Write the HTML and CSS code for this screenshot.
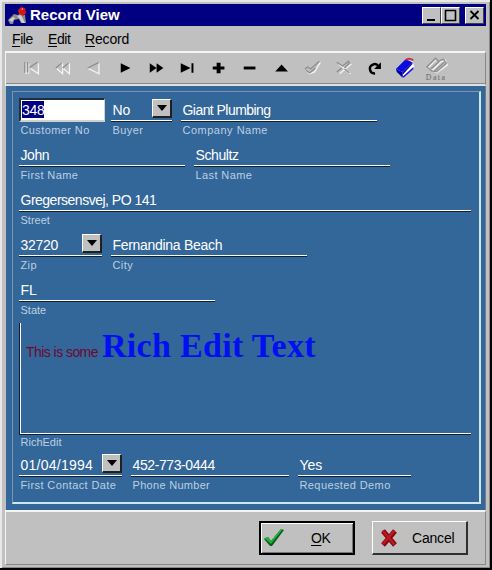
FILE: index.html
```html
<!DOCTYPE html>
<html lang="en">
<head>
<meta charset="utf-8">
<title>Record View</title>
<link rel="stylesheet" href="styles.css">
</head>
<body>
<div class="window">
  <header class="titlebar">
    <svg class="app-icon" width="20" height="20" viewBox="0 0 20 20">
      <path d="M0 15l3-3 3-3 4 1 3-2 4 2 1 8h-5l-2-4-5 1-1 4H2z" fill="#8c8c8c"/>
      <path d="M1 15l4-3 2 1-3 4zM9 11l4-1 2 4 2 4h-3l-3-5z" fill="#d0d0d0"/>
      <path d="M10 5l3-3 4 1 1 5-3 3-4-2z" fill="#d81414"/>
      <path d="M13 4l2-1v2z" fill="#f99"/>
    </svg>
    <h1>Record View</h1>
    <div class="controls">
      <button class="ctl"><svg width="17" height="14"><path d="M4 12h8" stroke="#000" stroke-width="2"/></svg></button>
      <button class="ctl"><svg width="17" height="14"><path d="M3.500 2v10.500h10V2M3 2.500h11" fill="none" stroke="#000" stroke-width="1.600"/></svg></button>
      <button class="ctl close"><svg width="17" height="14"><path d="M4.500 3l8 8M12.500 3l-8 8" stroke="#000" stroke-width="1.800"/></svg></button>
    </div>
  </header>
  <nav class="menu"><span class="m-file"><u>F</u>ile</span><span class="m-edit"><u>E</u>dit</span><span class="m-rec"><u>R</u>ecord</span></nav>
  <div class="toolbar">
    <svg class="off" viewBox="0 0 32 32"><path class="hi" d="M12 21h-2v-10M23 11v11l-8-5.500M13 11v11"/><path class="lo" d="M9 10v11M12 10v11M22 10l-8 5.500"/></svg>
    <svg class="off" viewBox="0 0 32 32"><path class="hi" d="M16 11v11l-6-5.500M23 11v11l-6-5.500"/><path class="lo" d="M15 11l-6 5M22 11l-6 5"/></svg>
    <svg class="off" viewBox="0 0 32 32"><path class="hi" d="M21.500 11v11l-11-5.500"/><path class="lo" d="M21 10.500l-11 5.500"/></svg>
    <svg viewBox="0 0 32 32"><path d="M11 11l10 5-10 5z"/></svg>
    <svg viewBox="0 0 32 32"><path d="M9 11l7 5-7 5zM16 11l7 5-7 5z"/></svg>
    <svg viewBox="0 0 32 32"><path d="M9 11l10 5-10 5zM20 11h2v10h-2z"/></svg>
    <svg viewBox="0 0 32 32"><path d="M14 10.500h4v4h4v3h-4v4h-4v-4h-4v-3h4z"/></svg>
    <svg viewBox="0 0 32 32"><path d="M10 14.500h12v3H10z"/></svg>
    <svg viewBox="0 0 32 32"><path d="M9.500 19.500l6.500-7 6.500 7z"/></svg>
    <svg class="off" viewBox="0 0 32 32"><path class="hi" d="M9 18l4 4 5-2 6-10"/><path class="lo" d="M8 17l3-2 3 2 9-8M9 18l4 3 6-5"/></svg>
    <svg class="off" viewBox="0 0 32 32"><path class="hi" d="M11 12l12 10M24 12l-12 10"/><path class="lo" d="M9 10l6 4 6-5 1 2-5 5M9 20l5-4M17 17l5 4"/></svg>
    <svg viewBox="0 0 32 32"><path d="M16.500 21.500a4.700 4.700 0 1 1 3.500-7" fill="none" stroke="#000" stroke-width="2.500"/><path d="M22.500 10v7h-7z"/></svg>
    <svg viewBox="0 0 32 32"><path d="M7 18l10-10 6 1 2 6-10 10z" fill="#fff"/><path d="M6 17L16 7l7 3-10 10z" fill="#0b0be0"/><path d="M6 17l7 3v6l-6-6z" fill="#0000a0"/><path d="M13 20l10-10v2L13 23z" fill="#0000a0"/><path d="M13 25l11-10v2L14 26z" fill="#0b0be0"/><path d="M16 8q3-3 8 0" fill="none" stroke="#c33" stroke-width="1.800"/></svg>
    <svg class="off" viewBox="0 0 32 32"><path class="hi" d="M7 16l9-9 4 3 5-2 2 5-11 8zM12 18l9-9"/><path class="lo" d="M6 15l9-9 3 3 5-2 3 4-10 9-5-1zM10 17l9-8M14 19l10-9"/><text x="5" y="28">Data</text></svg>
  </div>
  <main class="panel">
    <div class="group">
      <div class="row">
        <div class="field w-id"><div class="edit"><mark>348</mark></div><label>Customer No</label></div>
        <div class="field w-buyer"><div class="value">No<i class="drop"></i></div><label>Buyer</label></div>
        <div class="field w-196"><div class="value v-giant">Giant Plumbing</div><label class="l-comp">Company Name</label></div>
      </div>
      <div class="row">
        <div class="field w-first"><div class="value v-john">John</div><label>First Name</label></div>
        <div class="field w-196"><div class="value v-john">Schultz</div><label>Last Name</label></div>
      </div>
      <div class="row"><div class="field w-full"><div class="value v-street">Gregersensvej, PO 141</div><label class="l-tight">Street</label></div></div>
      <div class="row">
        <div class="field w-zip"><div class="value v-zip">32720<i class="drop"></i></div><label>Zip</label></div>
        <div class="field w-196"><div class="value v-city">Fernandina Beach</div><label>City</label></div>
      </div>
      <div class="row"><div class="field w-196"><div class="value">FL</div><label class="l-tight">State</label></div></div>
      <div class="rich-row"><div class="rich"><span class="plain">This is some</span><strong>Rich Edit Text</strong></div><label class="l-tight">RichEdit</label></div>
      <div class="row">
        <div class="field w-date"><div class="value v-date">01/04/1994<i class="drop"></i></div><label>First Contact Date</label></div>
        <div class="field w-phone"><div class="value v-phone">452-773-0444</div><label class="l-phone">Phone Number</label></div>
        <div class="field w-demo"><div class="value">Yes</div><label>Requested Demo</label></div>
      </div>
    </div>
  </main>
  <footer class="footer">
    <button class="btn default"><svg width="22" height="20" viewBox="0 0 22 20"><path d="M1 11l4-2 3 4L18 1l3 1L9 18H7z" fill="#0a5a20"/><path d="M1 10l4-1 3 4L18 1h2L8 16z" fill="#20b038"/></svg><span class="t-ok"><u>O</u>K</span></button>
    <button class="btn"><svg width="18" height="20" viewBox="0 0 18 20"><path d="M3 3l12 14M15 3L3 17" stroke="#800a10" stroke-width="5"/><path d="M2.500 2.500l12 14M14.500 2.500L3 16" stroke="#c01822" stroke-width="2.500"/></svg><span class="t-cancel">Cancel</span></button>
  </footer>
</div>
</body>
</html>
```
FILE: styles.css
```css
* { box-sizing: border-box; }
body { margin: 0; background: #c0c0c0; font: 14px/16px "Liberation Sans", sans-serif; color: #000; }
.window {
  width: 492px; height: 570px; padding: 4px 4px 3px 5px; display: flex; flex-direction: column;
  background: #c0c0c0; border-right: 2px solid #000; border-bottom: 2px solid #000;
  box-shadow: inset 2px 2px #e8e8e8, inset -1px -1px #888;
}
button { font: inherit; color: inherit; border-radius: 0; }
.titlebar { flex: none; height: 22px; width: 481px; background: #000080; display: flex; align-items: center; padding: 0 2px 0 3px; }
.app-icon { flex: none; }
h1 { margin: 0 0 0 2px; font-size: 15px; line-height: 22px; font-weight: bold; color: #fff; white-space: nowrap; }
.controls { margin-left: auto; display: flex; }
.ctl { width: 19px; height: 17px; padding: 0; background: #c0c0c0; border: 1px solid; border-color: #fff #404040 #404040 #fff; }
.ctl svg { display: block; }
.close { margin-left: 5px; }
.menu { flex: none; height: 25px; display: flex; padding: 5px 0 0 7px; white-space: nowrap; letter-spacing: -.4px; }
.m-file { width: 36px; }
.m-edit { width: 37px; }
.m-rec { letter-spacing: -.15px; }
u { text-underline-offset: 2px; }
.toolbar { flex: none; width: 481px; height: 35px; display: flex; padding-left: 10px; border: solid; border-width: 2px 1px 2px 1px; border-color: #f4f4f4 #888 #e0e0e0 #f4f4f4; box-shadow: inset 0 -1px #888; }
.toolbar svg { flex: none; width: 31.200px; height: 32px; margin-top: -1px; }
.off path { fill: none; stroke-width: 1.300; }
.off .hi { stroke: #f4f4f4; }
.off .lo { stroke: #8c8c8c; }
.off text { font: 8px "Liberation Serif", serif; letter-spacing: 1.5px; fill: #666; }
.panel { flex: none; width: 480px; height: 424px; margin-left: 1px; background: #336699; padding: 5px 5px 6px 6px; border-right: 1px solid #778; }
.group { width: 469px; height: 413px; border: solid; border-width: 1px 2px 2px 1px; border-color: #7c94b4 #cfe6ee #cfe6ee #7c94b4; padding: 6px 0 0 6px; }
.row { height: 45px; display: flex; gap: 9px; }
.field { flex: none; white-space: nowrap; color: #fff; }
.value { height: 24px; padding: 4px 0 0 1.500px; border-bottom: 1px solid #102030; box-shadow: inset 0 -1px #fff; display: flex; }
.v-giant { letter-spacing: -.55px; }
.v-john { letter-spacing: -.4px; }
.v-street { letter-spacing: -.5px; }
.v-zip { letter-spacing: -.3px; }
.v-city { letter-spacing: -.3px; }
.v-date { letter-spacing: .25px; }
.v-phone { letter-spacing: -.4px; }
.drop { width: 20px; height: 19px; margin: -3px 0 0 auto; background: #c0c0c0; border: solid; border-width: 1px 2px 2px 1px; border-color: #fff #202020 #202020 #fff; display: flex; align-items: center; justify-content: center; }
.drop::before { content: ""; border: 5px solid transparent; border-top: 6px solid #000; border-bottom: 0; }
label { display: block; padding-left: 1.500px; margin-top: 2px; font-size: 11px; line-height: 13px; color: #bdd0e2; letter-spacing: .4px; }
.l-comp { letter-spacing: .5px; }
.l-tight { letter-spacing: 0; }
.l-phone { letter-spacing: .3px; }
.edit { width: 86px; height: 24px; background: #fff; border: solid; border-width: 2px 1px 2px 2px; border-color: #203040 #d0d0d0 #d0d0d0 #203040; padding: 1px; }
mark { display: inline-block; height: 17px; background: #000080; color: #fff; line-height: 18px; letter-spacing: -.3px; }
.w-id { width: 83px; }
.w-buyer { width: 61px; }
.w-196 { width: 196px; }
.w-first { width: 166px; }
.w-full { width: 452px; }
.w-zip { width: 83px; }
.w-date { width: 103px; }
.w-phone { width: 158px; }
.w-demo { width: 113px; }
.rich-row { width: 452px; height: 130px; }
.rich { height: 112px; border: 1px solid #102030; border-width: 0 0 1px 1px; box-shadow: inset 1px -1px #fff; padding: 4px 0 0 6px; color: #700830; display: flex; align-items: baseline; white-space: nowrap; }
.plain { width: 76px; letter-spacing: -.55px; }
.rich strong { font: bold 34px/38px "Liberation Serif", serif; color: #0010f0; letter-spacing: .3px; }
.rich-row label { margin-top: 1px; }
.footer { flex: none; width: 481px; height: 55px; border: solid; border-width: 2px 1px 1px 1px; border-color: #f4f4f4 #888 #888 #f4f4f4; display: flex; justify-content: flex-end; gap: 17px; padding: 9px 17px 0 0; }
.btn { width: 96px; height: 34px; padding: 0; background: #c0c0c0; border: solid; border-width: 1px 2px 2px 1px; border-color: #fff #303030 #303030 #fff; display: flex; align-items: center; }
.default { border: 2px solid #000; box-shadow: inset 1px 1px #fff, inset -1px -1px #777; }
.btn svg { margin-left: 2px; }
.btn:not(.default) svg { margin-left: 7px; }
.t-ok { margin-left: 26px; letter-spacing: -.5px; }
.t-cancel { margin-left: 14px; letter-spacing: -.2px; }
```
